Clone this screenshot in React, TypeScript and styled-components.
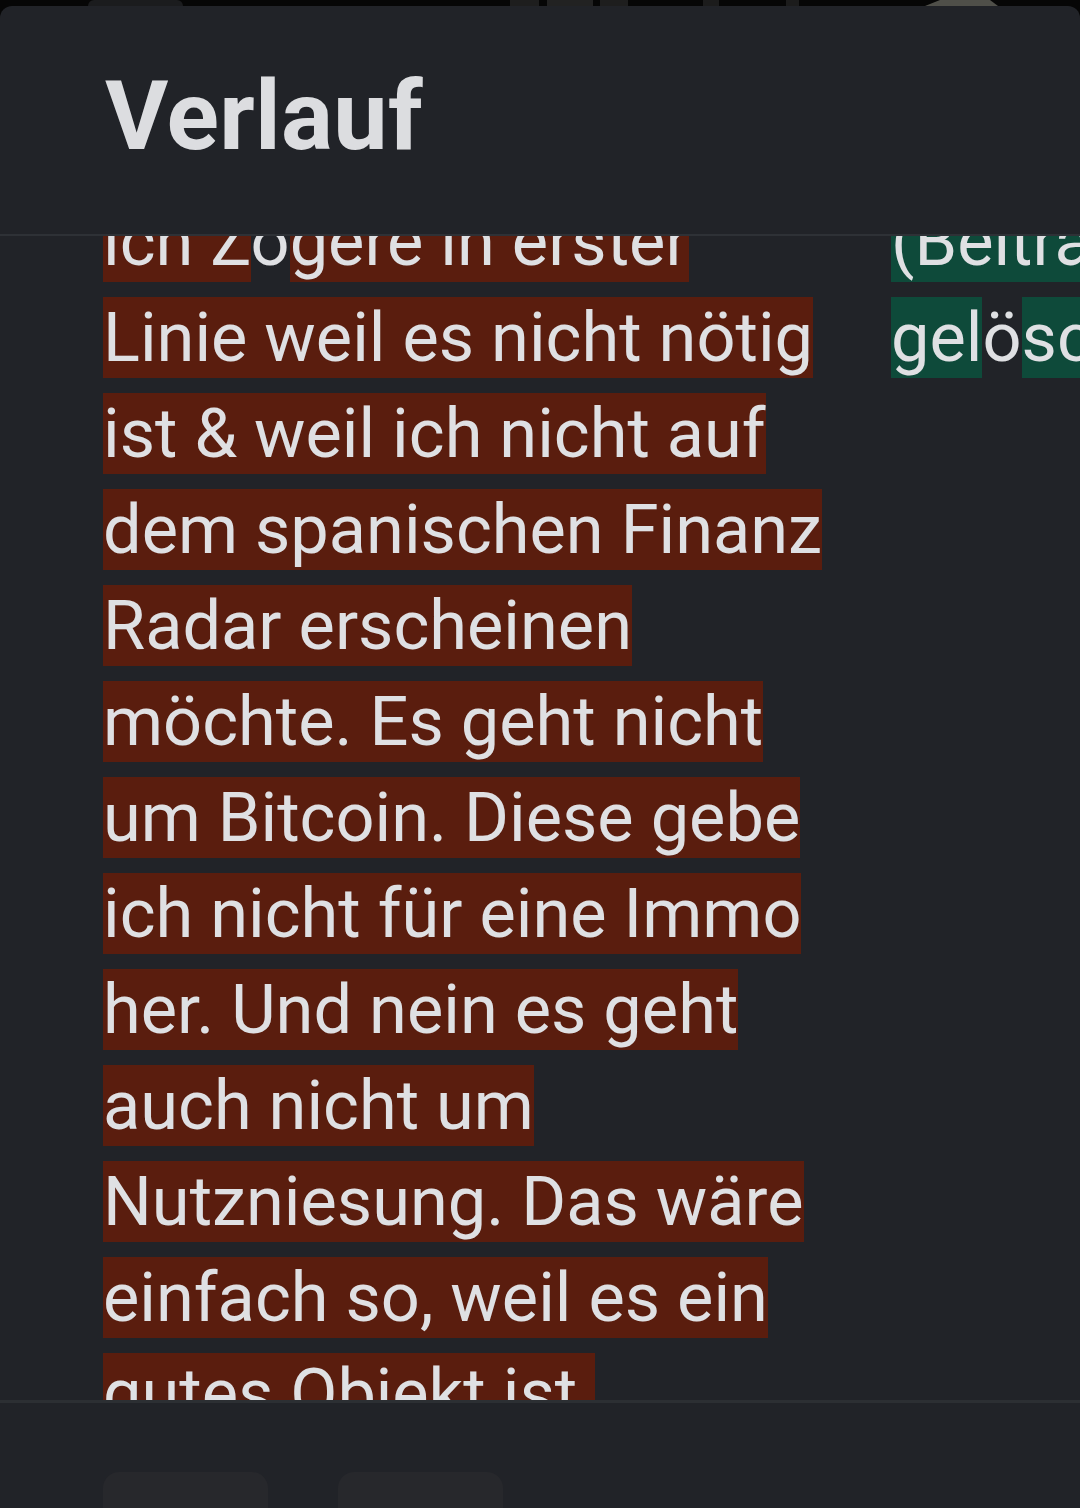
import React from "react";
import styled, { createGlobalStyle } from "styled-components";

const Global = createGlobalStyle`
  html, body { margin: 0; padding: 0; background: #060606; }
  body { font-family: Roboto, "Noto Sans", sans-serif; }
  * { box-sizing: border-box; }
`;

const Screen = styled.div`
  width: 1080px;
  height: 1508px;
  display: flex;
  flex-direction: column;
  overflow: hidden;
  background: #060606;
`;

const Backdrop = styled.svg`
  display: block;
  flex: 0 0 6px;
`;

const Sheet = styled.div`
  flex: 1;
  display: flex;
  flex-direction: column;
  min-height: 0;
  background: #212328;
  border-radius: 12px 12px 0 0;
`;

const Header = styled.header`
  flex: 0 0 230px;
  padding: 62px 105px 0;
  border-bottom: 2px solid #2e3136;
`;

const Title = styled.h1`
  margin: 0;
  font-family: Roboto, "Noto Sans", sans-serif;
  font-weight: 700;
  font-size: 97px;
  line-height: 1;
  letter-spacing: 0.3px;
  color: #dcdde0;
`;

const ScrollArea = styled.div`
  flex: 1;
  min-height: 0;
  overflow: hidden;
  padding-left: 103px;
  border-bottom: 3px solid #2c2f33;
`;

const DiffGrid = styled.div`
  margin-top: -42px;
  display: grid;
  grid-template-columns: 740px 740px;
  column-gap: 48px;
`;

const Column = styled.p`
  margin: 0;
  font-family: Roboto, "Noto Sans", sans-serif;
  font-size: 68.5px;
  line-height: 96px;
  color: #dfe0e3;
`;

const Mark = styled.span<{ $kind: "del" | "add" }>`
  background: ${(p) => (p.$kind === "del" ? "#5a1d0e" : "#0e4a3a")};
`;

const Footer = styled.footer`
  flex: 0 0 105px;
  height: 105px;
  overflow: hidden;
  display: flex;
  align-items: flex-start;
  gap: 70px;
  padding: 69px 103px 0;
`;

const FooterButton = styled.div`
  flex: 0 0 165px;
  height: 80px;
  border-radius: 16px;
  background: #27282c;
`;

export default function App() {
  return (
    <>
      <Global />
      <Screen>
        <Backdrop width="1080" height="6" viewBox="0 0 1080 6">
          <rect x="88" y="0" width="95" height="12" rx="6" fill="#1b1c1e" />
          <rect x="510" y="0" width="29" height="6" fill="#1e1e1e" />
          <rect x="547" y="0" width="46" height="6" fill="#222222" />
          <rect x="600" y="0" width="28" height="6" fill="#1e1e1e" />
          <rect x="703" y="0" width="16" height="6" fill="#1c1c1c" />
          <rect x="786" y="0" width="13" height="6" fill="#1c1c1c" />
          <path d="M925 6 L940 0 L990 0 L998 6 Z" fill="#4f4f49" />
        </Backdrop>
        <Sheet>
          <Header>
            <Title>Verlauf</Title>
          </Header>
          <ScrollArea>
            <DiffGrid>
              <Column>
                <Mark $kind="del">ich Z</Mark>ö
                <Mark $kind="del">
                  gere in erster Linie weil es nicht nötig ist &amp; weil ich
                  nicht auf dem spanischen Finanz Radar erscheinen möchte. Es
                  geht nicht um Bitcoin. Diese gebe ich nicht für eine Immo
                  her. Und nein es geht auch nicht um Nutzniesung. Das wäre
                  einfach so, weil es ein gutes Objekt ist.
                </Mark>
              </Column>
              <Column>
                <Mark $kind="add">(Beitrag wurde</Mark>
                <br />
                <Mark $kind="add">gel</Mark>ö<Mark $kind="add">scht)</Mark>
              </Column>
            </DiffGrid>
          </ScrollArea>
          <Footer>
            <FooterButton />
            <FooterButton />
          </Footer>
        </Sheet>
      </Screen>
    </>
  );
}
